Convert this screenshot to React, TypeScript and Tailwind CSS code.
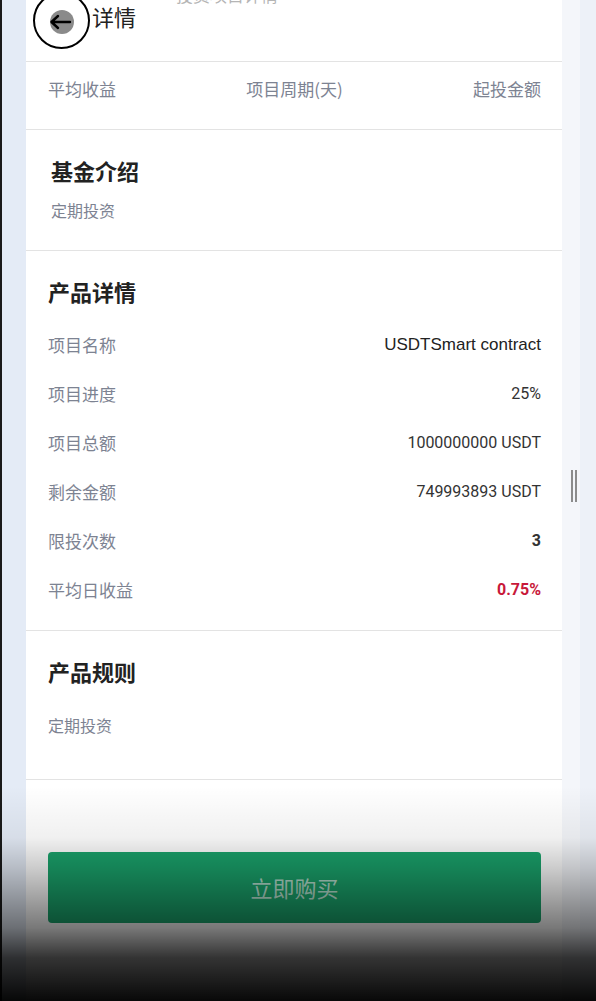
import React from "react";

const cjk = { fontFamily: '"Noto Sans CJK SC", "Noto Sans", sans-serif' };

function Row({ label, value, valueClass }: { label: string; value: string; valueClass: string }) {
  return (
    <div className="flex h-[49px] items-center justify-between">
      <span className="text-[17px] text-[#7d8392]" style={cjk}>{label}</span>
      <span className={valueClass}>{value}</span>
    </div>
  );
}

export default function App() {
  const num = "text-[16px] text-[#333] font-['Roboto',sans-serif]";
  return (
    <div className="relative flex h-[1001px] w-[596px] overflow-hidden bg-white" style={cjk}>
      {/* left strip */}
      <div className="h-full w-[26px] shrink-0 border-l-2 border-[#1a1a1a] bg-[#e4ebf6]" />
      {/* card */}
      <div className="flex h-full w-[536px] shrink-0 flex-col bg-white">
        {/* header */}
        <div className="relative flex h-[62px] shrink-0 items-start border-b border-[#e3e3e3]">
          <span className="absolute left-[150px] top-[-16px] text-[17px] leading-[22px] text-[#b5b5b5]">投资项目详情</span>
          <div className="relative ml-[7px] mt-[-8px] flex h-[57px] w-[57px] items-center justify-center rounded-full border-2 border-black">
            <div className="mt-[2px] flex h-[24px] w-[24px] items-center justify-center rounded-full bg-[#8a8a8a]">
              <svg width="24" height="16" viewBox="0 0 24 16" className="ml-[-4px]">
                <path d="M22 8 H4 M10 2 L3.5 8 L10 14" stroke="#000" strokeWidth="2.4" fill="none" strokeLinecap="round" strokeLinejoin="round" />
              </svg>
            </div>
          </div>
          <span className="ml-[2px] mt-[1px] text-[22px] leading-[30px] text-[#222]">详情</span>
        </div>
        {/* summary labels */}
        <div className="flex h-[68px] shrink-0 items-start justify-between border-b border-[#e3e3e3] pl-[22px] pr-[21px] pt-[14px] text-[17px] leading-[25px] text-[#7d8392]">
          <span>平均收益</span>
          <span>项目周期(天)</span>
          <span>起投金额</span>
        </div>
        {/* 基金介绍 */}
        <div className="shrink-0 border-b border-[#e3e3e3] pb-[28px] pl-[25px] pt-[25px]">
          <div className="h-[30px] text-[22px] font-bold leading-[30px] text-[#222]">基金介绍</div>
          <div className="mt-[13px] h-[24px] text-[16px] leading-[24px] text-[#7d8392]">定期投资</div>
        </div>
        {/* 产品详情 */}
        <div className="shrink-0 border-b border-[#e3e3e3] pb-[16px] pl-[22px] pr-[21px] pt-[25px]">
          <div className="h-[30px] text-[22px] font-bold leading-[30px] text-[#222]">产品详情</div>
          <div className="mt-[14px] flex flex-col">
            <Row label="项目名称" value="USDTSmart contract" valueClass="text-[17px] text-[#222] font-['Liberation_Sans',Arial,sans-serif]" />
            <Row label="项目进度" value="25%" valueClass={num} />
            <Row label="项目总额" value="1000000000 USDT" valueClass={num} />
            <Row label="剩余金额" value="749993893 USDT" valueClass={num} />
            <Row label="限投次数" value="3" valueClass={num + " font-bold"} />
            <Row label="平均日收益" value="0.75%" valueClass="text-[16px] font-bold text-[#c8183a] font-['Roboto',sans-serif]" />
          </div>
        </div>
        {/* 产品规则 */}
        <div className="shrink-0 border-b border-[#e3e3e3] pb-[42px] pl-[22px] pt-[25px]">
          <div className="h-[30px] text-[22px] font-bold leading-[30px] text-[#222]">产品规则</div>
          <div className="mt-[27px] h-[24px] text-[16px] leading-[24px] text-[#7d8392]">定期投资</div>
        </div>
        {/* button */}
        <div className="ml-[22px] mt-[72px] flex h-[71px] w-[493px] shrink-0 items-center justify-center rounded-[4px] bg-[#1aa46c] text-[22px] text-white/70">
          立即购买
        </div>
      </div>
      {/* right strip */}
      <div className="flex h-full flex-1">
        <div className="h-full w-[18px] bg-[#f4f6fa]" />
        <div className="h-full flex-1 bg-[#edf1f8]" />
      </div>
      {/* scroll handle */}
      <div className="absolute left-[571px] top-[470px] flex gap-[2px]">
        <div className="h-[32px] w-[2px] bg-[#8c8c8c]" />
        <div className="h-[32px] w-[2px] bg-[#8c8c8c]" />
      </div>
      {/* bottom shade */}
      <div
        className="pointer-events-none absolute bottom-0 left-0 h-[215px] w-full"
        style={{
          background:
            "linear-gradient(to bottom, rgba(0,0,0,0) 0%, rgba(0,0,0,0.06) 24%, rgba(0,0,0,0.2) 38%, rgba(0,0,0,0.53) 66%, rgba(0,0,0,0.8) 80%, rgba(0,0,0,0.97) 100%)",
        }}
      />
    </div>
  );
}
